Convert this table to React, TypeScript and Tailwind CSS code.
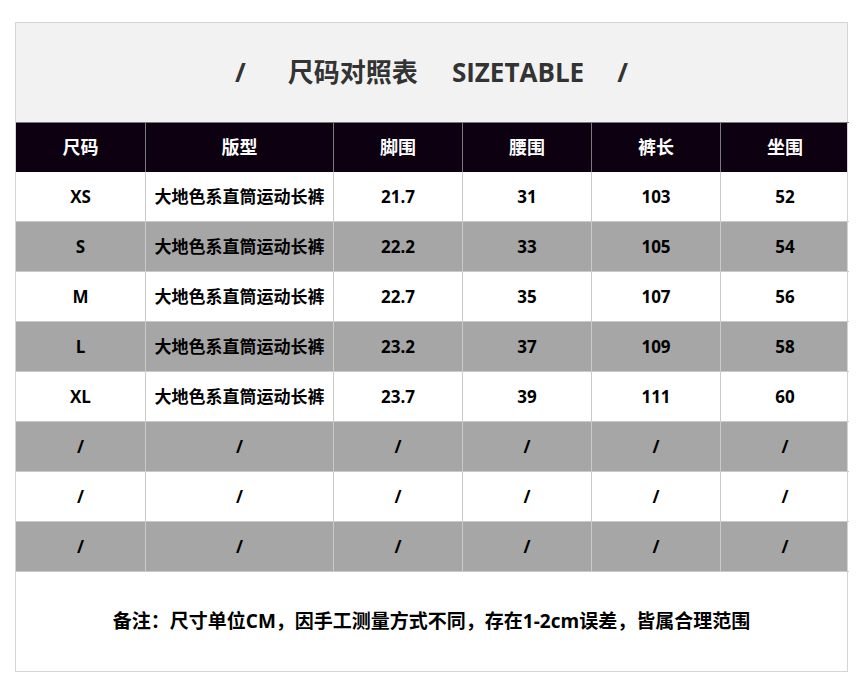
const FONT = "font-['Open_Sans','Noto_Sans_CJK_SC',sans-serif]";

const head = ["尺码", "版型", "脚围", "腰围", "裤长", "坐围"];
const rows: string[][] = [
  ["XS", "大地色系直筒运动长裤", "21.7", "31", "103", "52"],
  ["S", "大地色系直筒运动长裤", "22.2", "33", "105", "54"],
  ["M", "大地色系直筒运动长裤", "22.7", "35", "107", "56"],
  ["L", "大地色系直筒运动长裤", "23.2", "37", "109", "58"],
  ["XL", "大地色系直筒运动长裤", "23.7", "39", "111", "60"],
  ["/", "/", "/", "/", "/", "/"],
  ["/", "/", "/", "/", "/", "/"],
  ["/", "/", "/", "/", "/", "/"],
];

const cols = "grid grid-cols-[129px_188px_129px_129px_129px_129px]";

export default function App() {
  return (
    <div className={`min-h-[686px] bg-white pt-[22px] pl-[15px] ${FONT}`}>
      <div className="w-[833px] border-x border-[#d4d4d4]">
        <div className="flex h-[100px] items-center justify-center border-t border-[#d4d4d4] bg-[#f2f2f2] text-[26px] font-bold text-[#333]">
          <span className="pr-[42px]">/</span>
          <span className="pr-[34px]">尺码对照表</span>
          <span className="pr-[33px]">SIZETABLE</span>
          <span>/</span>
        </div>
        <div className={`${cols} h-[50px] bg-[#0d0010] text-[18px] font-bold text-white`}>
          {head.map((h, i) => (
            <div
              key={i}
              className={`flex items-center justify-center border-t border-[#7a7a7a] ${i > 0 ? "border-l" : ""}`}
            >
              {h}
            </div>
          ))}
        </div>
        {rows.map((r, ri) => (
          <div
            key={ri}
            className={`${cols} h-[50px] text-[17px] font-bold text-black ${ri % 2 ? "bg-[#a6a6a6]" : "bg-white"}`}
          >
            {r.map((c, ci) => (
              <div
                key={ci}
                className={`flex items-center justify-center border-b border-[#cacaca] ${ci > 0 ? "border-l" : ""}`}
              >
                {c}
              </div>
            ))}
          </div>
        ))}
        <div className="flex h-[100px] items-center justify-center border-b border-[#d4d4d4] bg-white text-[19px] font-bold text-black">
          备注：尺寸单位CM，因手工测量方式不同，存在1-2cm误差，皆属合理范围
        </div>
      </div>
    </div>
  );
}
